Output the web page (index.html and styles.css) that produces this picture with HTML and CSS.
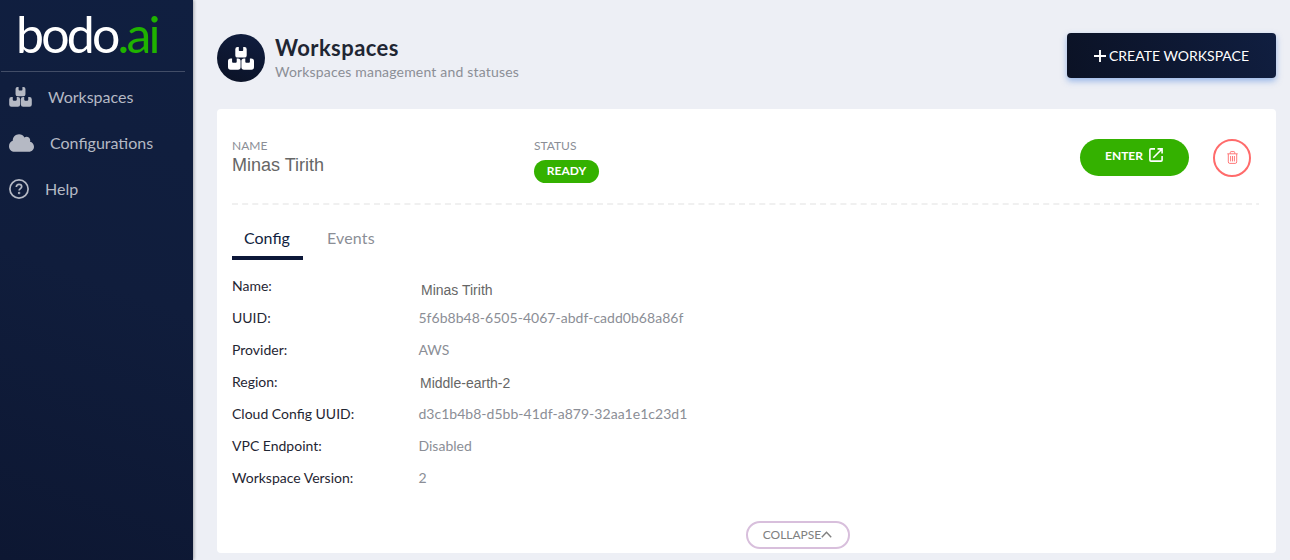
FILE: index.html
```html
<!DOCTYPE html>
<html lang="en">
<head>
<meta charset="utf-8">
<title>Workspaces</title>
<link rel="stylesheet" href="styles.css">
</head>
<body>
<svg class="defs" aria-hidden="true">
  <symbol id="boxes" viewBox="0 0 26 23">
    <path d="M9.500 0h1.300v3.200q0 .8.800.8h2.800q.8 0 .8-.8V0h1.300a2.200 2.200 0 0 1 2.200 2.200v6.200a2.200 2.200 0 0 1-2.200 2.200h-7a2.200 2.200 0 0 1-2.200-2.200V2.200A2.200 2.200 0 0 1 9.500 0zM2.800 11.500h1.300v3.300q0 .9.900.9h2.800q.9 0 .9-.9v-3.300H10a2.600 2.600 0 0 1 2.600 2.600v6a2.600 2.600 0 0 1-2.600 2.600H2.600A2.600 2.600 0 0 1 0 20.100v-5.800a2.800 2.800 0 0 1 2.800-2.800zM16 11.500h1.300v3.300q0 .9.900.9H21q.9 0 .9-.9v-3.300h1.300a2.800 2.800 0 0 1 2.800 2.800v5.800a2.600 2.600 0 0 1-2.600 2.600H16a2.600 2.600 0 0 1-2.600-2.600v-6a2.600 2.600 0 0 1 2.600-2.600z" fill="currentColor"/>
  </symbol>
</svg>
<div class="app">
  <aside class="sidebar">
    <div class="logo">bodo<span class="logo-ai">.ai</span></div>
    <nav class="nav">
      <a class="nav-item"><svg class="nav-boxes"><use href="#boxes"/></svg><span>Workspaces</span></a>
      <a class="nav-item nav-config"><svg class="nav-cloud" viewBox="0 0 640 448"><path d="M537.600 194.600c4.100-10.700 6.400-22.400 6.400-34.600 0-53-43-96-96-96-19.700 0-38.100 6-53.300 16.200C367 32.200 315.300 0 256 0 167.600 0 96 71.600 96 160c0 2.700.1 5.400.2 8.100C40.200 187.800 0 241.200 0 304c0 79.500 64.500 144 144 144h368c70.700 0 128-57.300 128-128 0-61.900-44-113.600-102.400-125.400z" fill="currentColor"/></svg><span>Configurations</span></a>
      <a class="nav-item nav-help"><svg class="nav-question" viewBox="0 0 20 20" fill="none" stroke="currentColor" stroke-width="1.700"><circle cx="10" cy="10" r="9.100"/><path d="M7.300 8.100c0-1.700 1.100-2.700 2.700-2.700s2.700 1 2.700 2.300c0 1.900-2.600 2-2.600 3.900"/><circle cx="10.100" cy="14" r=".4"/></svg><span>Help</span></a>
    </nav>
  </aside>
  <main class="main">
    <header class="page-header">
      <div class="page-icon"><svg class="page-boxes"><use href="#boxes"/></svg></div>
      <div class="page-titles">
        <h1 class="page-title">Workspaces</h1>
        <p class="page-subtitle">Workspaces management and statuses</p>
      </div>
      <button class="create"><svg class="plus" viewBox="0 0 12 12"><path d="M6 0v12M0 6h12" stroke="currentColor" stroke-width="1.900"/></svg><span>CREATE WORKSPACE</span></button>
    </header>
    <section class="card">
      <div class="summary">
        <div class="field name-field"><div class="label">NAME</div><div class="workspace-name">Minas Tirith</div></div>
        <div class="field"><div class="label">STATUS</div><div class="badge">READY</div></div>
        <div class="actions">
          <button class="enter"><span>ENTER</span><svg class="open" viewBox="0 0 14 14" fill="none" stroke="currentColor" stroke-width="1.600"><path d="M6 .9H2Q.9.900.9 2v10q0 1.100 1.100 1.100h10q1.100 0 1.100-1.100V8M8.500.9h4.600v4.600M13 1 4.300 9.700"/></svg></button>
          <button class="delete" aria-label="Delete"><svg class="trash" viewBox="0 0 11 13" fill="none" stroke="currentColor" stroke-width=".9"><path d="M.3 2.800h10.400M3.300 2.600V1.400Q3.300.6 4.100.6h2.800q.8 0 .8.800v1.200M1.300 3v7.900q0 1.500 1.500 1.500h5.400q1.500 0 1.500-1.500V3M3.600 5v5.400M5.500 5v5.400M7.400 5v5.400"/></svg></button>
        </div>
      </div>
      <svg class="divider"><path d="M0 1h1027" stroke="#f0f0f0" stroke-width="2" stroke-dasharray="6 4.140"/></svg>
      <div class="tabs"><div class="tab tab-active">Config</div><div class="tab">Events</div></div>
      <dl class="details">
        <dt>Name:</dt><dd class="plain plain-name">Minas Tirith</dd>
        <dt>UUID:</dt><dd>5f6b8b48-6505-4067-abdf-cadd0b68a86f</dd>
        <dt>Provider:</dt><dd>AWS</dd>
        <dt>Region:</dt><dd class="plain plain-region">Middle-earth-2</dd>
        <dt>Cloud Config UUID:</dt><dd>d3c1b4b8-d5bb-41df-a879-32aa1e1c23d1</dd>
        <dt>VPC Endpoint:</dt><dd>Disabled</dd>
        <dt>Workspace Version:</dt><dd>2</dd>
      </dl>
      <button class="collapse"><span>COLLAPSE</span><svg class="chevron" viewBox="0 0 11 7"><path d="M.8 6.200 5.500 1.200l4.700 5" fill="none" stroke="currentColor" stroke-width="1.400"/></svg></button>
    </section>
  </main>
</div>
</body>
</html>
```
FILE: styles.css
```css
* { box-sizing: border-box; }
body { margin: 0; font-family: Lato, sans-serif; font-size: 14px; color: #1f2633; }
button { font-family: inherit; padding: 0; border: 0; margin: 0; }
.defs { position: absolute; width: 0; height: 0; }
.app { display: flex; height: 560px; background: #edeff5; overflow: hidden; }
.sidebar { width: 193px; flex: none; background: linear-gradient(200deg, #101f40, #101d3c 50%, #0d1732); box-shadow: 1px 0 3px rgba(0,0,0,.3); }
.logo { height: 72px; margin: 0 8px 0 1px; padding-left: 15px; border-bottom: 1px solid #424d67; color: #fff; font-size: 50px; line-height: 69px; letter-spacing: -2.800px; white-space: nowrap; }
.logo-ai { color: #1fb300; }
.nav { padding: 2px 0 0 9px; color: #b5b9c4; }
.nav-item { display: flex; align-items: center; height: 46px; gap: 16px; font-size: 16px; }
.nav-item span { padding-bottom: 2px; }
.nav-boxes { width: 23px; height: 20px; }
.nav-cloud { width: 25px; height: 18px; }
.nav-question { width: 20px; height: 20px; }
.main { flex: 1; min-width: 0; padding: 33px 14px 0 24px; }
.page-header { display: flex; height: 76px; align-items: flex-start; }
.page-icon { width: 48px; height: 48px; margin-top: 1px; border-radius: 50%; background: linear-gradient(20deg, #0b1225, #101e40); color: #fff; display: flex; align-items: center; justify-content: center; }
.page-boxes { width: 26px; height: 23px; }
.page-titles { padding-left: 10px; flex: 1; }
.page-title { margin: 0; font-size: 22px; line-height: 30px; font-weight: 700; letter-spacing: .43px; }
.page-subtitle { margin: 0; line-height: 18px; color: #8b8e96; letter-spacing: .18px; }
.create { display: flex; align-items: center; justify-content: center; gap: 3px; width: 209px; height: 45px; border-radius: 4px; background: linear-gradient(70deg, #0b1225, #101e40); box-shadow: 0 3px 6px rgba(65,125,220,.5); color: #fff; font-size: 14px; }
.plus { width: 12px; height: 12px; }
.card { height: 444px; border-radius: 4px; background: #fff; padding: 29px 17px 0 15px; display: flex; flex-direction: column; }
.summary { display: flex; height: 65px; }
.field { flex: 1; }
.name-field { flex: none; width: 302px; }
.label { color: #8b8e96; font-size: 12px; line-height: 16px; }
.workspace-name { font-family: "Liberation Sans", sans-serif; font-size: 18px; line-height: 23px; color: #666; }
.badge { width: 65px; height: 23px; margin-top: 6px; border-radius: 12px; background: #34b100; color: #fff; font-size: 12px; font-weight: 700; line-height: 22px; text-align: center; }
.actions { display: flex; gap: 24px; padding-right: 8px; }
.enter { width: 109px; height: 37px; margin-top: .5px; border-radius: 19px; background: #34b100; color: #fff; font-size: 12px; font-weight: 700; display: flex; align-items: center; justify-content: center; gap: 6px; padding: 0 1px 4px 0; }
.open { width: 14px; height: 14px; }
.delete { width: 38px; height: 38px; margin-top: .5px; border: 2px solid #ff6b6b; border-radius: 50%; background: none; color: #ff6b6b; display: flex; align-items: center; justify-content: center; }
.trash { width: 11px; height: 13px; }
.divider { width: 1027px; height: 2px; flex: none; }
.tabs { display: flex; gap: 12px; height: 55px; padding-top: 17px; font-size: 16px; color: #8b8e96; }
.tab { height: 38px; padding: 0 12px; line-height: 32px; letter-spacing: .15px; }
.tab-active { width: 71px; color: #101e40; border-bottom: 4px solid #0c1738; letter-spacing: normal; }
.details { display: grid; grid-template-columns: 186px 1fr; grid-auto-rows: 32px; margin: 10px 0 0; line-height: 32px; }
.details dd { margin: 0; color: #8b8e96; padding-left: .4px; letter-spacing: .03px; }
.details .plain { font-family: "Liberation Sans", sans-serif; color: #666; letter-spacing: 0; }
.details .plain-name { padding: 4px 0 0 3px; }
.details .plain-region { padding: 1px 0 0 2px; }
.collapse { width: 104px; height: 28px; margin: 27px 0 0 514px; border: 2px solid #d8bfdc; border-radius: 14px; background: #fff; color: #808080; font-size: 12px; display: flex; align-items: center; justify-content: center; padding: 0 1px 1px 0; }
.chevron { width: 11px; height: 7px; }
```
